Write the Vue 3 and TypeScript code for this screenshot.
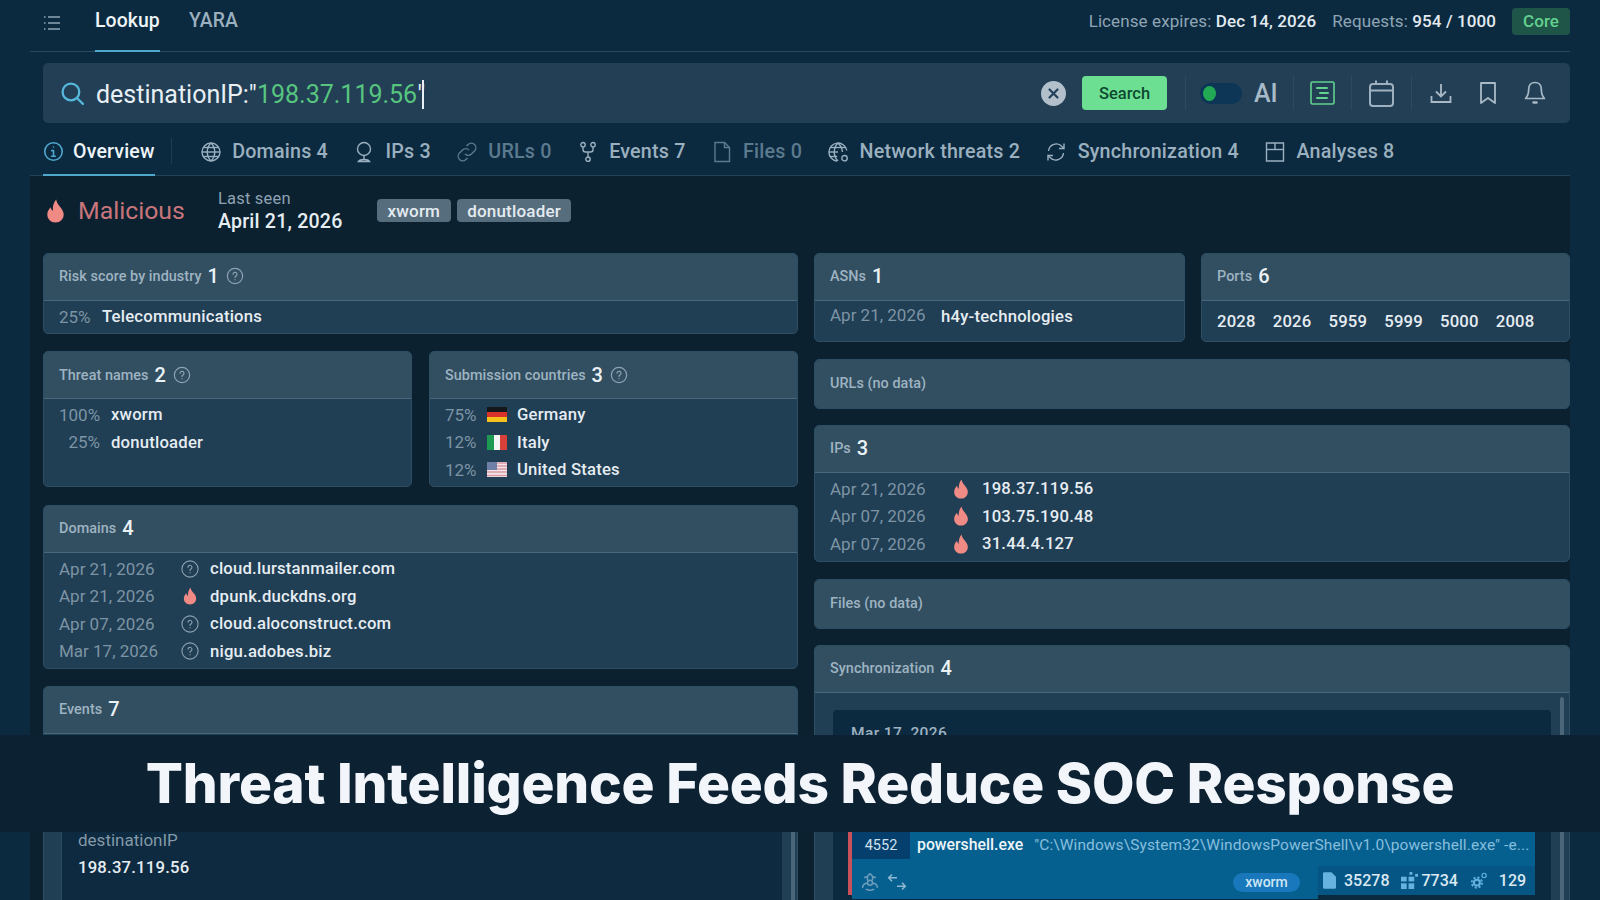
<script setup lang="ts">
const flame = 'M12.6 1.5c.5 3.6 2.7 5.4 4.6 7.9 1.3 1.7 2.3 3.6 2.3 5.8 0 4.3-3.3 7.3-7.5 7.3s-7.5-3-7.5-7.3c0-2.9 1.4-5 3.2-6.7.2 1.6.8 2.7 1.9 3.3C9.3 8.4 10.100 4.300 12.600 1.500z'
interface Tab { label: string; dim?: boolean; paths: string[] }
const tabs: Tab[] = [
  { label: 'Domains 4', paths: ['M12 3a9 9 0 1 0 0 18 9 9 0 0 0 0-18z', 'M3 12h18', 'M4.200 7.500h15.600', 'M4.200 16.500h15.600', 'M12 3c-5 5-5 13 0 18', 'M12 3c5 5 5 13 0 18'] },
  { label: 'IPs 3', paths: ['M12 2.500a6.500 6.500 0 0 0-6.500 6.500c0 3.600 2.900 6.500 6.500 6.500s6.500-2.900 6.500-6.500A6.500 6.500 0 0 0 12 2.500z', 'M12 15.500v4', 'M6.500 21.500c1-1.500 3-2 5.500-2s4.500.5 5.500 2z'] },
  { label: 'URLs 0', dim: true, paths: ['M10 14a4.500 4.500 0 0 0 6.400 0l3.100-3.100a4.500 4.500 0 0 0-6.400-6.400l-1.600 1.600', 'M14 10a4.500 4.500 0 0 0-6.400 0l-3.100 3.100a4.500 4.500 0 0 0 6.400 6.400l1.600-1.600'] },
  { label: 'Events 7', paths: ['M7 2.500a2.200 2.200 0 1 0 0 4.400 2.200 2.200 0 0 0 0-4.400z', 'M17 2.500a2.200 2.200 0 1 0 0 4.400 2.200 2.200 0 0 0 0-4.400z', 'M12 17a2.200 2.200 0 1 0 0 4.400 2.200 2.200 0 0 0 0-4.400z', 'M7 7v2.500c0 1.600 1 2.500 2.500 2.500h5c1.500 0 2.500-.9 2.500-2.500V7', 'M12 12v5'] },
  { label: 'Files 0', dim: true, paths: ['M5 2.500h9.500L19.500 7.500v14H5z', 'M14.500 2.500v5h5'] },
  { label: 'Network threats 2', paths: ['M20.800 10.500A9 9 0 1 0 11 21', 'M3 12h9', 'M4.200 7.500h15.600', 'M4.200 16.500h7', 'M12 3c-5 5-5 13 0 18', 'M12 3c3 3 4.200 6 4.500 9', 'M18.500 15.500a2.700 2.700 0 1 0 0 5.400 2.700 2.700 0 0 0 0-5.400z'] },
  { label: 'Synchronization 4', paths: ['M4.500 11a7.800 7.800 0 0 1 13.500-4.500L20 8.500', 'M20 3.500v5h-5', 'M19.500 13a7.800 7.800 0 0 1-13.500 4.500L4 15.500', 'M4 20.500v-5h5'] },
  { label: 'Analyses 8', paths: ['M3.500 3h17v18h-17z', 'M3.500 9.500h17', 'M12 3v6.500'] },
]
const threats = [{ pct: '100%', name: 'xworm' }, { pct: '25%', name: 'donutloader' }]
const countries = [{ pct: '75%', name: 'Germany', code: 'de' }, { pct: '12%', name: 'Italy', code: 'it' }, { pct: '12%', name: 'United States', code: 'us' }]
const domains = [
  { date: 'Apr 21, 2026', name: 'cloud.lurstanmailer.com', bad: false },
  { date: 'Apr 21, 2026', name: 'dpunk.duckdns.org', bad: true },
  { date: 'Apr 07, 2026', name: 'cloud.aloconstruct.com', bad: false },
  { date: 'Mar 17, 2026', name: 'nigu.adobes.biz', bad: false },
]
const ips = [
  { date: 'Apr 21, 2026', name: '198.37.119.56' },
  { date: 'Apr 07, 2026', name: '103.75.190.48' },
  { date: 'Apr 07, 2026', name: '31.44.4.127' },
]
const ports = ['2028', '2026', '5959', '5999', '5000', '2008']
</script>

<template>
  <div class="page">
    <header class="top">
      <svg class="menu" viewBox="0 0 20 20" fill="none" stroke="#8ea6b6" stroke-width="1.500">
        <path d="M6 4h12M6 10h12M6 16h12" /><path d="M2 4h1.500M2 10h1.500M2 16h1.500" />
      </svg>
      <nav class="topnav">
        <span class="topnav-item active">Lookup</span>
        <span class="topnav-item">YARA</span>
      </nav>
      <div class="license">
        <span>License expires: <b>Dec 14, 2026</b></span>
        <span>Requests: <b>954 / 1000</b></span>
        <span class="core">Core</span>
      </div>
    </header>

    <section class="search">
      <svg class="search-icon" viewBox="0 0 24 24" fill="none" stroke="#56b7dc" stroke-width="2.200">
        <circle cx="10.500" cy="10.500" r="8" /><path d="M16.500 16.500 22 22" stroke-linecap="round" />
      </svg>
      <div class="query">destinationIP:"<span class="query-val">198.37.119.56</span>"<i class="caret"></i></div>
      <svg class="clear" viewBox="0 0 25 25">
        <circle cx="12.500" cy="12.500" r="12.500" fill="#b3c0cb" />
        <path d="M8.500 8.500l8 8M16.500 8.500l-8 8" stroke="#22405a" stroke-width="2.200" stroke-linecap="round" />
      </svg>
      <button class="go">Search</button>
      <i class="sep sep-a"></i>
      <span class="toggle"><i></i></span>
      <span class="ai">AI</span>
      <i class="sep sep-b"></i>
      <svg class="doc" viewBox="0 0 25 24" fill="none" stroke="#62d28e" stroke-width="1.600">
        <rect x="1" y="1" width="23" height="22" rx="1.500" />
        <path d="M7 7h10M10 12h8M7 17h10" stroke-width="2" stroke-linecap="round" />
      </svg>
      <i class="sep sep-c"></i>
      <svg class="cal" viewBox="0 0 25 27" fill="none" stroke="#9fb1bf" stroke-width="2">
        <rect x="1" y="4" width="23" height="22" rx="3" />
        <path d="M1 10.500h23M7 0.500V4M18 0.500V4" />
      </svg>
      <i class="sep sep-d"></i>
      <svg class="dl" viewBox="0 0 22 22" fill="none" stroke="#a9bac6" stroke-width="1.800">
        <path d="M11 2v12M6 9.500l5 5 5-5" /><path d="M1.500 14v6h19v-6" />
      </svg>
      <svg class="mark" viewBox="0 0 16 22" fill="none" stroke="#a9bac6" stroke-width="1.800">
        <path d="M1 1h14v20l-7-5-7 5z" stroke-linejoin="round" />
      </svg>
      <svg class="bell" viewBox="0 0 22 24" fill="none" stroke="#a9bac6" stroke-width="1.700">
        <path d="M11 1.500c-4 0-6.300 3-6.300 6.500 0 5-1.200 7.500-3.200 9.500h19c-2-2-3.200-4.500-3.200-9.500 0-3.500-2.300-6.500-6.300-6.500z" stroke-linejoin="round" />
        <path d="M9.500 21.500h3" stroke-width="2.400" stroke-linecap="round" />
      </svg>
    </section>

    <nav class="tabs">
      <span class="tab tab-on">
        <svg class="tab-icon" viewBox="0 0 24 24" fill="none" stroke="#4fa9cc" stroke-width="1.800">
          <circle cx="12" cy="12" r="10" /><path d="M12 11v6.500M9.800 17.500h4.400M12 6.800v.1M10 11h2" stroke-linecap="round" />
        </svg>
        Overview
      </span>
      <i class="tab-sep"></i>
      <span v-for="t in tabs" :key="t.label" class="tab" :class="{ dim: t.dim }">
        <svg class="tab-icon" viewBox="0 0 24 24" fill="none" stroke="currentColor" stroke-width="1.400">
          <path v-for="p in t.paths" :key="p" :d="p" />
        </svg>
        {{ t.label }}
      </span>
    </nav>

    <main class="panel">
      <div class="status">
        <svg class="status-flame" viewBox="4 1 16 22"><path :d="flame" fill="#f08a85" /></svg>
        <span class="verdict">Malicious</span>
        <div class="seen"><span>Last seen</span><b>April 21, 2026</b></div>
        <div class="tags"><span class="tag">xworm</span><span class="tag">donutloader</span></div>
      </div>

      <div class="grid">
        <div class="col col-l">
          <section class="card card-risk">
            <h3 class="head">Risk score by industry <em>1</em>
              <svg class="q q-head" viewBox="0 0 20 20" fill="none" stroke="currentColor" stroke-width="1.300"><circle cx="10" cy="10" r="8.500" /><path d="M7.800 8a2.200 2.200 0 1 1 3.300 2c-.7.400-1.100.8-1.100 1.700M10 14v.3" stroke-linecap="round" /></svg>
            </h3>
            <div class="body"><div class="row"><span class="muted w-pct">25%</span><span class="val">Telecommunications</span></div></div>
          </section>

          <div class="pair">
            <section class="card card-half">
              <h3 class="head">Threat names <em>2</em>
                <svg class="q q-head" viewBox="0 0 20 20" fill="none" stroke="currentColor" stroke-width="1.300"><circle cx="10" cy="10" r="8.500" /><path d="M7.800 8a2.200 2.200 0 1 1 3.300 2c-.7.400-1.100.8-1.100 1.700M10 14v.3" stroke-linecap="round" /></svg>
              </h3>
              <div class="body">
                <div v-for="t in threats" :key="t.name" class="row"><span class="muted w-threat">{{ t.pct }}</span><span class="val">{{ t.name }}</span></div>
              </div>
            </section>
            <section class="card card-half">
              <h3 class="head">Submission countries <em>3</em>
                <svg class="q q-head" viewBox="0 0 20 20" fill="none" stroke="currentColor" stroke-width="1.300"><circle cx="10" cy="10" r="8.500" /><path d="M7.800 8a2.200 2.200 0 1 1 3.300 2c-.7.400-1.100.8-1.100 1.700M10 14v.3" stroke-linecap="round" /></svg>
              </h3>
              <div class="body">
                <div v-for="c in countries" :key="c.name" class="row">
                  <span class="muted w-country">{{ c.pct }}</span>
                  <svg class="flag" viewBox="0 0 20 15">
                    <template v-if="c.code === 'de'">
                      <rect width="20" height="5" fill="#15181a" /><rect y="5" width="20" height="5" fill="#d8322a" /><rect y="10" width="20" height="5" fill="#f5c21c" />
                    </template>
                    <template v-else-if="c.code === 'it'">
                      <rect width="7" height="15" fill="#1c9a52" /><rect x="7" width="6" height="15" fill="#f2f5f4" /><rect x="13" width="7" height="15" fill="#d8403a" />
                    </template>
                    <template v-else>
                      <rect width="20" height="15" fill="#f0e4e6" />
                      <path d="M0 1h20M0 4h20M0 7h20M0 10h20M0 13.500h20" stroke="#d99aa6" stroke-width="1.600" />
                      <rect width="10" height="8" fill="#6f7fa8" />
                    </template>
                  </svg>
                  <span class="val">{{ c.name }}</span>
                </div>
              </div>
            </section>
          </div>

          <section class="card card-domains">
            <h3 class="head">Domains <em>4</em></h3>
            <div class="body">
              <div v-for="d in domains" :key="d.name" class="row">
                <span class="muted w-date-d">{{ d.date }}</span>
                <svg v-if="d.bad" class="q" viewBox="4 1 16 22"><path :d="flame" fill="#f08a85" /></svg>
                <svg v-else class="q q-row" viewBox="0 0 20 20" fill="none" stroke="currentColor" stroke-width="1.200"><circle cx="10" cy="10" r="9" /><path d="M7.800 8a2.200 2.200 0 1 1 3.300 2c-.7.400-1.100.8-1.100 1.700M10 14v.3" stroke-linecap="round" /></svg>
                <span class="val">{{ d.name }}</span>
              </div>
            </div>
          </section>

          <section class="card card-open">
            <h3 class="head">Events <em>7</em></h3>
            <div class="body body-events">
              <div class="inner inner-events">
                <span class="field">destinationIP</span>
                <span class="field-val">198.37.119.56</span>
              </div>
              <i class="scroll scroll-l"></i>
            </div>
          </section>
        </div>

        <div class="col col-r">
          <div class="pair">
            <section class="card card-asn">
              <h3 class="head">ASNs <em>1</em></h3>
              <div class="body"><div class="row"><span class="muted w-asn">Apr 21, 2026</span><span class="val">h4y-technologies</span></div></div>
            </section>
            <section class="card card-asn">
              <h3 class="head">Ports <em>6</em></h3>
              <div class="body ports"><span v-for="p in ports" :key="p" class="val">{{ p }}</span></div>
            </section>
          </div>

          <section class="card card-empty"><h3 class="head head-flat">URLs (no data)</h3></section>

          <section class="card card-ips">
            <h3 class="head">IPs <em>3</em></h3>
            <div class="body">
              <div v-for="i in ips" :key="i.name" class="row">
                <span class="muted w-date-i">{{ i.date }}</span>
                <svg class="ip-flame" viewBox="4 1 16 22"><path :d="flame" fill="#f08a85" /></svg>
                <span class="val">{{ i.name }}</span>
              </div>
            </div>
          </section>

          <section class="card card-empty"><h3 class="head head-flat">Files (no data)</h3></section>

          <section class="card card-open">
            <h3 class="head">Synchronization <em>4</em></h3>
            <div class="body body-sync">
              <div class="inner inner-sync">
                <span class="sync-date">Mar 17, 2026</span>
                <div class="event">
                  <div class="event-top">
                    <span class="pid">4552</span>
                    <b class="proc">powershell.exe</b>
                    <span class="cmd">"C:\Windows\System32\WindowsPowerShell\v1.0\powershell.exe" -e...</span>
                  </div>
                  <div class="event-bottom">
                    <div class="event-left">
                      <svg class="ev-ic" viewBox="0 0 24 24" fill="none" stroke="#6f9dbb" stroke-width="1.800">
                        <circle cx="12" cy="13" r="3" /><path d="M12 2c-3 2-4 5-2.500 8M12 2c3 2 4 5 2.500 8M3 19c.5-4 3-6 6.500-5.500M21 19c-.5-4-3-6-6.500-5.500M7 20.500c3 1.600 7 1.600 10 0M5 7c2-1.500 4-1.500 5-1M19 7c-2-1.500-4-1.500-5-1" />
                      </svg>
                      <svg class="ev-ic" viewBox="0 0 24 24" fill="none" stroke="#8fb8d2" stroke-width="1.800">
                        <path d="M12 7H2M6 3 2 7l4 4M12 17h10M18 13l4 4-4 4" />
                      </svg>
                      <span class="pill">xworm</span>
                    </div>
                    <div class="stats">
                      <svg class="st-ic" viewBox="0 0 14 18"><path d="M0 1.500A1.500 1.500 0 0 1 1.500 0H9l5 5v11.500a1.500 1.500 0 0 1-1.500 1.500h-11A1.500 1.500 0 0 1 0 16.500z" fill="#66b3e0" /></svg>
                      <span class="st st-a">35278</span>
                      <svg class="st-ic st-grid" viewBox="0 0 18 18" fill="#66b3e0"><rect y="5" width="6" height="5" /><rect x="8" y="5" width="6" height="5" /><rect y="12" width="6" height="6" /><rect x="8" y="12" width="6" height="6" /><rect x="9" width="3" height="3" /><rect x="15" y="2" width="3" height="3" /></svg>
                      <span class="st st-b">7734</span>
                      <svg class="st-ic st-gear" viewBox="0 0 20 20" fill="none" stroke="#66b3e0"><circle cx="7.500" cy="12.500" r="3.500" stroke-width="2.400" /><circle cx="7.500" cy="12.500" r="6" stroke-width="2.200" stroke-dasharray="2.400 2.300" /><circle cx="16" cy="4" r="2.500" stroke-width="1.300" /></svg>
                      <span class="st st-c">129</span>
                    </div>
                  </div>
                </div>
              </div>
              <i class="scroll scroll-r"></i>
            </div>
          </section>
        </div>
      </div>
    </main>

    <div class="banner"><span>Threat Intelligence Feeds Reduce SOC Response</span></div>
  </div>
</template>

<style>
html, body { margin: 0; background: #0b2a40; }
</style>

<style scoped>
.page {
  position: relative; width: 1600px; height: 900px; overflow: hidden; box-sizing: border-box;
  padding: 0 30px; background: #0b2a40; color: #e8eff4;
  font-family: Roboto, "Liberation Sans", sans-serif; display: flex; flex-direction: column;
}
svg { display: block; flex: none; }
h3, b, em, i { font-style: normal; }

.top { height: 52px; flex: none; box-sizing: border-box; display: flex; align-items: center; border-bottom: 1px solid #2b4a60; }
.menu { width: 20px; height: 20px; margin: -6px 0 0 12px; }
.topnav { display: flex; gap: 29px; margin-left: 33px; align-self: stretch; }
.topnav-item { height: 52px; box-sizing: border-box; padding-top: 9px; font-size: 19.400px; font-weight: 500; color: #9bb0bf; letter-spacing: .1px; }
.topnav-item.active { color: #eef4f7; border-bottom: 2px solid #4fa9cc; }
.license { margin-left: auto; display: flex; align-items: center; gap: 16px; font-size: 17px; color: #8fa5b4; margin-top: -9px; letter-spacing: .1px; }
.license b { color: #e2eaf0; font-weight: 500; }
.core { width: 58px; height: 27px; border-radius: 4px; background: #1f5548; color: #63d08f; display: flex; align-items: center; justify-content: center; font-weight: 500; }

.search { height: 60px; flex: none; margin: 11px 0 0 13px; display: flex; align-items: center; background: #223f55; border-radius: 5px; }
.search-icon { width: 25px; height: 25px; margin-left: 17px; }
.query { font-size: 25px; margin: 2px 0 0 11px; color: #e8eff4; display: flex; align-items: center; }
.query-val { color: #57c57f; }
.caret { width: 2px; height: 29px; background: #e8eff4; margin-left: -3px; }
.clear { width: 25px; height: 25px; margin-left: auto; }
.go { width: 85px; height: 34px; margin-left: 16px; border: 0; border-radius: 4px; background: #6cdf92; color: #0c4a30; font: 500 16.500px Roboto, sans-serif; }
.sep { width: 1px; height: 34px; background: #2c4a60; flex: none; }
.sep-a { margin-left: 18px; }
.toggle { width: 42px; height: 21px; border-radius: 11px; background: #0c3556; margin-left: 14px; display: flex; align-items: center; padding-left: 3px; box-sizing: border-box; }
.toggle i { width: 13px; height: 15px; border-radius: 50%; background: #22a954; }
.ai { font-size: 25px; font-weight: 500; color: #a8bac8; margin-left: 12px; width: 25px; }
.sep-b { margin-left: 14px; }
.doc { width: 25px; height: 24px; margin-left: 16px; }
.sep-c { margin-left: 16px; }
.cal { width: 25px; height: 27px; margin-left: 17px; }
.sep-d { margin-left: 17px; }
.dl { width: 22px; height: 22px; margin-left: 18px; }
.mark { width: 16px; height: 22px; margin-left: 28px; }
.bell { width: 22px; height: 24px; margin-left: 28px; margin-right: 24px; }

.tabs { height: 53px; flex: none; box-sizing: border-box; display: flex; align-items: stretch; padding-left: 13px; border-bottom: 1px solid #244258; }
.tab { display: flex; align-items: center; gap: 9.500px; margin-right: 24px; font-size: 19.700px; font-weight: 500; color: #9bb0bf; letter-spacing: .2px; white-space: nowrap; padding-top: 5px; box-sizing: border-box; }
.tab.dim { color: #5c7a8e; }
.tab-on { color: #eef4f7; margin-right: 16px; gap: 9px; border-bottom: 2px solid #4fa9cc; margin-bottom: -1px; font-size: 19.500px; }
.tab-icon { width: 24px; height: 24px; }
.tab-on .tab-icon { color: #4fa9cc; width: 21px; height: 21px; }
.tab-sep { width: 1px; height: 26px; background: #1f3d52; align-self: center; margin: 4px 27px 0 0; }

.panel { flex: 1; min-height: 0; background: #0b2130; padding-left: 13px; }
.status { height: 77px; display: flex; align-items: center; box-sizing: border-box; padding-bottom: 8px; }
.status-flame { width: 21px; height: 24px; margin-left: 2px; }
.verdict { font-size: 24.800px; color: #c9757b; margin-left: 12px; width: 140px; }
.seen { display: flex; flex-direction: column; gap: 2px; width: 159px; font-size: 16.500px; color: #8ea3b2; letter-spacing: .2px; padding-top: 1px; }
.seen b { font-size: 19.600px; font-weight: 500; color: #e6edf2; }
.tags { display: flex; gap: 6px; }
.tag { height: 23px; padding: 0 10.500px; display: flex; align-items: center; border-radius: 4px; background: #566d7e; color: #e4ebf0; font-size: 17px; font-weight: 500; letter-spacing: .2px; }

.grid { display: grid; grid-template-columns: 755px 756px; gap: 16px; }
.col { display: flex; flex-direction: column; gap: 17px; }
.col-r { gap: 16.500px; }
.pair { display: grid; grid-template-columns: 1fr 1fr; gap: 17px; }
.col-r .pair { grid-template-columns: 371px 369px; gap: 16px; }

.card { box-sizing: border-box; border-radius: 5px; background: #203e54; border: 1px solid #2e4e64; overflow: hidden; display: flex; flex-direction: column; }
.head { margin: 0; flex: none; height: 47px; box-sizing: border-box; padding: 0 15px 2px; display: flex; align-items: center; gap: 6px; background-color: #324f62; border-bottom: 1px solid #4a687c; font-size: 14.400px; font-weight: 500; color: #9eb3c1; letter-spacing: .05px; }
.head em { font-size: 20px; font-weight: 500; color: #eaf1f5; }
.card-half .head { padding-bottom: 0; }
.head-flat { height: 100%; border-bottom: 0; padding-bottom: 1px; }
.body { flex: 1; padding: 2px 15px 0; }
.row { height: 27.500px; display: flex; align-items: center; font-size: 17px; }
.muted { color: #7d94a4; flex: none; font-size: 17px; }
.val { color: #e6edf2; font-weight: 500; letter-spacing: .2px; font-size: 16.700px; }
.card-risk { height: 81px; }
.card-half { height: 136px; }
.card-domains { height: 164px; margin-top: 1px; }
.card-asn { height: 89px; }
.card-empty { height: 50px; }
.card-ips { height: 137px; }
.card-open { flex: none; height: 500px; }
.w-pct { width: 43px; }
.w-threat { width: 41px; text-align: right; margin-right: 11px; }
.w-country { width: 42px; }
.flag { width: 20px; height: 15px; margin-right: 10px; }
.w-date-d { width: 122px; }
.w-date-i { width: 122px; }
.w-asn { width: 111px; padding-bottom: 3px; }
.w-date-i + svg { margin-left: 1px; }
.q { width: 18px; height: 18px; margin-right: 11px; color: #8ea3b2; }
.q-head { margin: 0 0 0 1px; }
.ip-flame { width: 16px; height: 20px; margin-right: 13px; }
.ports { display: flex; gap: 17px; padding-top: 5px; align-items: center; height: 30px; flex: none; }

.body-events { position: relative; padding: 0 0 0 17px; }
.inner { background: #0d2a40; box-sizing: border-box; }
.inner-events { width: 721px; height: 320px; margin-top: 30px; padding: 66px 0 0 16px; display: flex; flex-direction: column; gap: 8px; border-left: 1px solid #2a4a60; }
.field { font-size: 17px; color: #8399a8; }
.field-val { font-size: 16.700px; font-weight: 500; color: #e6edf2; letter-spacing: .2px; }
.scroll { position: absolute; width: 4px; background: #4b6678; border-radius: 2px; top: 4px; bottom: 0; }
.scroll-l { right: 2px; }
.scroll-r { right: 5px; }

.body-sync { position: relative; padding: 17px 0 0 18px; }
.inner-sync { width: 718px; height: 320px; border-radius: 4px; background: #0b2a40; padding: 14px 16px 0 15px; display: flex; flex-direction: column; }
.sync-date { font-size: 15.500px; font-weight: 500; color: #9fb2c0; letter-spacing: .4px; height: 20px; padding-left: 3px; }
.event { margin-top: 83px; border-left: 4px solid #c9525a; width: 687px; box-sizing: border-box; }
.event-top { height: 32px; display: flex; align-items: center; background: #06608f; }
.pid { width: 58px; height: 32px; padding-top: 4px; box-sizing: border-box; background: #053f6d; display: flex; align-items: center; justify-content: center; font-size: 14.500px; color: #cfe1ee; margin-right: 7px; }
.proc { font-size: 15.800px; font-weight: 500; color: #eef5f9; margin-right: 11px; padding-top: 3px; }
.cmd { font-size: 15.500px; color: #86bede; white-space: nowrap; padding-top: 3px; letter-spacing: .1px; }
.event-bottom { display: flex; align-items: flex-start; height: 36px; background: #06608f; }
.event-left { width: 466px; height: 40px; background: #06608f; display: flex; align-items: center; padding: 6px 0 0 8px; box-sizing: border-box; gap: 7px; }
.ev-ic { width: 20px; height: 20px; }
.pill { margin-left: 319px; flex: none; width: 67px; height: 19px; border-radius: 10px; background: #1878bb; color: #cfe6f5; font-size: 14px; font-weight: 500; display: flex; align-items: center; justify-content: center; }
.stats { flex: 1; height: 29px; margin-top: 7px; background: #055684; display: flex; align-items: center; }
.st { font-size: 16px; font-weight: 500; color: #dbe9f2; }
.st-ic { width: 13px; height: 17px; margin-left: 5px; }
.st-grid { width: 17px; margin-left: 12px; }
.st-gear { width: 18px; margin-left: 12px; }
.st-a { margin-left: 8px; }
.st-b { margin-left: 3px; }
.st-c { margin-left: 11px; }

.banner { position: absolute; left: 0; right: 0; top: 735px; height: 97px; padding-bottom: 1px; box-sizing: border-box; background: #0c2132; display: flex; align-items: center; justify-content: center; }
.banner span { font: 800 55px Inter, "Liberation Sans", sans-serif; color: #f2f5fa; white-space: nowrap; letter-spacing: -.2px; }
</style>
